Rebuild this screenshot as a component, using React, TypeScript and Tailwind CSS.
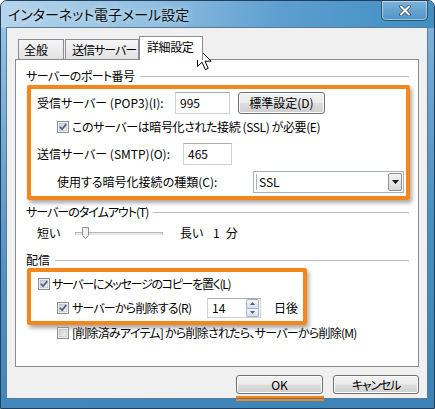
import React from "react";

const F =
  "font-['Noto_Sans_CJK_JP','Noto_Sans_CJK_SC',sans-serif] [font-feature-settings:'palt']";

function CheckBox({ checked }: { checked: boolean }) {
  return (
    <svg width="12" height="12" viewBox="0 0 12 12" className="shrink-0">
      <defs>
        <linearGradient id="cbg" x1="0" y1="0" x2="1" y2="1">
          <stop offset="0" stopColor="#c9cdd4" />
          <stop offset="1" stopColor="#f6f6f6" />
        </linearGradient>
      </defs>
      <rect x="0.5" y="0.5" width="11" height="11" fill="#f4f4f4" stroke="#8e8f8f" />
      <rect x="2.2" y="2.2" width="7.6" height="7.6" fill="url(#cbg)" stroke="#b4b8be" strokeWidth="0.6" />
      {checked && (
        <path d="M2.9 5.7 L5.1 8.2 L9.2 3.1" fill="none" stroke="#4b5f88" strokeWidth="1.7" />
      )}
    </svg>
  );
}

function Btn({ children, className }: { children: React.ReactNode; className: string }) {
  return (
    <div
      className={
        "flex items-center justify-center whitespace-nowrap rounded-[3px] border border-[#707070] bg-[linear-gradient(#f2f2f2_0%,#ebebeb_48%,#dddddd_52%,#cfcfcf_100%)] shadow-[inset_0_0_0_1px_#fbfbfb] " +
        className
      }
    >
      {children}
    </div>
  );
}

function Header({ label, lineMl, tr }: { label: string; lineMl: string; tr: string }) {
  return (
    <div className="flex h-[16px] items-center pl-[10px] pr-[9px]">
      <span className={"whitespace-nowrap leading-[16px] " + tr}>{label}</span>
      <div className={"h-px flex-1 bg-[#bcbcbc] " + lineMl} />
    </div>
  );
}

export default function App() {
  return (
    <div className={"relative h-[409px] w-[435px] overflow-hidden bg-white text-[12px] text-black " + F}>
      <div className="flex h-[409px] w-[435px] flex-col rounded-t-[7px] border border-[#243f5c] bg-[linear-gradient(170deg,#9fc6e4_0%,#6fa8d3_30%,#4a90c3_60%,#3b82b6_100%)]">
        {/* title bar */}
        <div className="flex h-[27px] shrink-0 items-start rounded-t-[6px] bg-[linear-gradient(100deg,#b4d4ec_0%,#8fbfe1_35%,#5c9ecf_65%,#3f8fc2_100%)]">
          <div className="whitespace-nowrap pl-[7px] pt-[4px] text-[14px] leading-[18px] text-[#0b0b0b] [text-shadow:0_0_6px_rgba(255,255,255,0.9)]">
            インターネット電子メール設定
          </div>
          <div className="ml-auto mr-[6px] flex h-[20px] w-[47px] items-center justify-center rounded-b-[5px] border border-t-0 border-[#33506c] bg-[linear-gradient(#7db3da,#4f95c6)] shadow-[inset_0_0_0_1px_rgba(255,255,255,0.45)]">
            <svg width="12" height="11" viewBox="0 0 12 11">
              <path d="M2 1.5 L10 9.5 M10 1.5 L2 9.5" stroke="#3a4e63" strokeWidth="3.6" strokeLinecap="round" />
              <path d="M2 1.5 L10 9.5 M10 1.5 L2 9.5" stroke="#ffffff" strokeWidth="2" strokeLinecap="round" />
            </svg>
          </div>
        </div>

        {/* client */}
        <div className="ml-[6px] h-[370px] w-[420px] shrink-0 bg-[#f0f0f0] outline outline-1 outline-[#5a7a98]">
          {/* tabs */}
          <div className="flex h-[31px] items-end pl-[11px]">
            <div className="flex h-[20px] w-[46px] items-center whitespace-nowrap border border-b-0 border-[#898c95] bg-[linear-gradient(#f6f6f6,#e2e2e2)] pl-[5px]">
              全般
            </div>
            <div className="ml-[1px] flex h-[20px] w-[74px] items-center overflow-hidden whitespace-nowrap border border-b-0 border-[#898c95] bg-[linear-gradient(#f6f6f6,#e2e2e2)] pl-[6px] tracking-[-1px]">
              送信サーバー
            </div>
            <div className="relative z-10 -mb-px flex h-[24px] w-[64px] items-start whitespace-nowrap border border-b-0 border-[#898c95] bg-white pl-[7px] pt-[2px] leading-[16px] tracking-[-0.4px]">
              詳細設定
            </div>
          </div>

          {/* panel */}
          <div className="ml-[8px] h-[308px] w-[404px] border border-[#898c95] bg-white">
            <div className="mt-[8px]">
              <Header label="サーバーのポート番号" lineMl="ml-[6px]" tr="tracking-[-0.6px]" />
            </div>

            {/* orange box 1 */}
            <div className="ml-[11px] mt-[1px] w-[383px] rounded-[2px] border-[4px] border-[#f5861c] pb-[3px] pt-[3px] shadow-[2px_3px_4px_rgba(0,0,0,0.35)]">
              <div className="flex h-[22px] items-center pl-[6px]">
                <span className="w-[138px] whitespace-nowrap">受信サーバー (POP3)(I):</span>
                <div className="flex h-[22px] w-[55px] items-center border border-[#cdd1d8] border-t-[#abadb3] bg-white pl-[4px]">
                  995
                </div>
                <Btn className="ml-[8px] h-[22px] w-[87px]">標準設定(D)</Btn>
              </div>
              <div className="mt-[5px] flex h-[16px] items-center gap-[3px] pl-[26px]">
                <CheckBox checked />
                <span className="whitespace-nowrap tracking-[-0.4px]">このサーバーは暗号化された接続 (SSL) が必要(E)</span>
              </div>
              <div className="mt-[8px] flex h-[22px] items-center pl-[6px]">
                <span className="w-[146px] whitespace-nowrap">送信サーバー (SMTP)(O):</span>
                <div className="flex h-[22px] w-[49px] items-center border border-[#cdd1d8] border-t-[#abadb3] bg-white pl-[4px]">
                  465
                </div>
              </div>
              <div className="mt-[6px] flex h-[22px] items-center pl-[26px]">
                <span className="w-[196px] whitespace-nowrap">使用する暗号化接続の種類(C):</span>
                <div className="flex h-[22px] w-[151px] items-center border border-[#a9afb8] bg-white">
                  <div className="ml-[2px] h-[16px] w-px bg-[#9fb3cf]" />
                  <span className="ml-[2px] flex-1">SSL</span>
                  <div className="mr-px flex h-[18px] w-[14px] items-center justify-center rounded-[2px] border border-[#8c8f94] bg-[linear-gradient(#f4f4f4,#d8d8d8)]">
                    <svg width="7" height="4" viewBox="0 0 7 4">
                      <path d="M0 0 L7 0 L3.5 4 Z" fill="#111" />
                    </svg>
                  </div>
                </div>
              </div>
            </div>

            <div className="mt-[4px]">
              <Header label="サーバーのタイムアウト(T)" lineMl="ml-[5px]" tr="tracking-[-1px]" />
            </div>

            {/* slider row */}
            <div className="mt-[5px] flex h-[16px] items-center pl-[21px]">
              <span className="w-[38px]">短い</span>
              <div className="relative h-[12px] w-[88px]">
                <div className="absolute left-0 right-0 top-[5px] h-[3px] border border-[#b8b8b8] border-b-[#e4e4e4] bg-[#e8e8e8]" />
                <svg className="absolute left-[7px] top-0" width="7" height="12" viewBox="0 0 7 12">
                  <path d="M0.5 0.5 H6.5 V8.5 L3.5 11.5 L0.5 8.5 Z" fill="#f0f0f0" stroke="#8f8f8f" />
                </svg>
              </div>
              <span className="ml-[17px] w-[33px]">長い</span>
              <span>1</span>
              <span className="ml-[6px]">分</span>
            </div>

            <div className="mt-[11px]">
              <Header label="配信" lineMl="ml-[5px]" tr="" />
            </div>

            {/* orange box 2 */}
            <div className="ml-[11px] w-[280px] rounded-[2px] border-[4px] border-[#f5861c] pb-[3px] pt-[4px] shadow-[2px_3px_4px_rgba(0,0,0,0.35)]">
              <div className="flex h-[16px] items-center gap-[2px] pl-[7px]">
                <CheckBox checked />
                <span className="whitespace-nowrap tracking-[-1.3px]">サーバーにメッセージのコピーを置く(L)</span>
              </div>
              <div className="mt-[6px] flex h-[20px] items-center pl-[26px]">
                <div className="flex w-[150px] items-center gap-[3px]">
                  <CheckBox checked />
                  <span className="whitespace-nowrap tracking-[-0.8px]">サーバーから削除する(R)</span>
                </div>
                <div className="flex h-[20px] w-[54px] items-center border border-[#cdd1d8] border-t-[#abadb3] bg-white pl-[4px]">
                  <span className="flex-1">14</span>
                  <div className="mr-px flex h-[18px] w-[13px] flex-col">
                    <div className="flex flex-1 items-center justify-center rounded-t-[2px] border border-[#a6b2c4] bg-[linear-gradient(#f3f6fa,#d8e0ea)]">
                      <svg width="5" height="3" viewBox="0 0 5 3">
                        <path d="M0 3 L5 3 L2.5 0 Z" fill="#4b5f80" />
                      </svg>
                    </div>
                    <div className="flex flex-1 items-center justify-center rounded-b-[2px] border border-t-0 border-[#a6b2c4] bg-[linear-gradient(#f3f6fa,#d8e0ea)]">
                      <svg width="5" height="3" viewBox="0 0 5 3">
                        <path d="M0 0 L5 0 L2.5 3 Z" fill="#4b5f80" />
                      </svg>
                    </div>
                  </div>
                </div>
                <span className="ml-[13px]">日後</span>
              </div>
            </div>

            <div className="flex h-[16px] items-center gap-[3px] pl-[41px]">
              <CheckBox checked={false} />
              <span className="whitespace-nowrap tracking-[-0.75px]">[削除済みアイテム] から削除されたら、サーバーから削除(M)</span>
            </div>
          </div>

          {/* buttons */}
          <div className="mt-[8px] flex items-start justify-end pr-[8px]">
            <div className="flex flex-col">
              <Btn className="h-[19px] w-[87px]">OK</Btn>
              <div className="mt-[2px] h-[5px] w-[88px] bg-[#f5861c]" />
            </div>
            <Btn className="ml-[9px] h-[19px] w-[86px] tracking-[-1.2px]">キャンセル</Btn>
          </div>
        </div>
      </div>

      {/* mouse cursor */}
      <svg className="absolute left-[196px] top-[46px]" width="17" height="26" viewBox="0 0 17 26">
        <path
          d="M1.5 1.5 L1.5 20.5 L6 16.2 L9.3 23.6 L12.2 22.4 L9 15.2 L15.2 15.2 Z"
          fill="#ffffff"
          stroke="#000000"
          strokeWidth="1"
          strokeLinejoin="miter"
        />
      </svg>
    </div>
  );
}
